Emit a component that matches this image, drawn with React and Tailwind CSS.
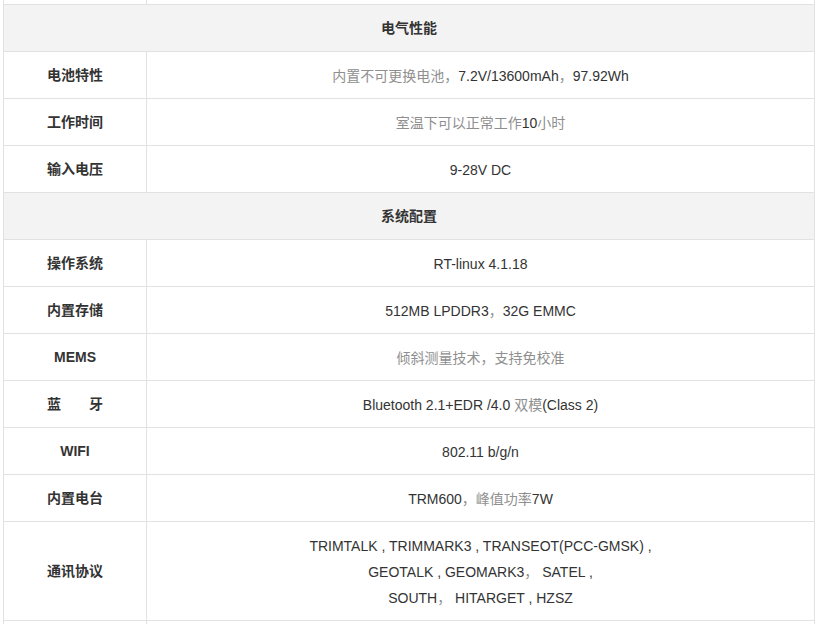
const C = ({ children }) => <span className="text-[#8f8f8f]">{children}</span>;

const sections = [
  {
    title: "电气性能",
    rows: [
      {
        label: "电池特性",
        value: (
          <>
            <C>内置不可更换电池，</C>7.2V/13600mAh<C>，</C>97.92Wh
          </>
        ),
      },
      {
        label: "工作时间",
        value: (
          <>
            <C>室温下可以正常工作</C>10<C>小时</C>
          </>
        ),
      },
      { label: "输入电压", value: "9-28V DC" },
    ],
  },
  {
    title: "系统配置",
    rows: [
      { label: "操作系统", value: "RT-linux 4.1.18" },
      {
        label: "内置存储",
        value: (
          <>
            512MB LPDDR3<C>，</C>32G EMMC
          </>
        ),
      },
      { label: "MEMS", value: <C>倾斜测量技术，支持免校准</C> },
      {
        label: "蓝　　牙",
        value: (
          <>
            Bluetooth 2.1+EDR /4.0 <C>双模</C>(Class 2)
          </>
        ),
      },
      { label: "WIFI", value: "802.11 b/g/n" },
      {
        label: "内置电台",
        value: (
          <>
            TRM600<C>，峰值功率</C>7W
          </>
        ),
      },
      {
        label: "通讯协议",
        tall: true,
        value: (
          <>
            TRIMTALK , TRIMMARK3 , TRANSEOT(PCC-GMSK) ,
            <br />
            GEOTALK , GEOMARK3<C>，</C> SATEL ,
            <br />
            SOUTH<C>，</C> HITARGET , HZSZ
          </>
        ),
      },
    ],
  },
];

const cell = "border border-[#e2e2e2] text-center align-middle pt-[2px]";

export default function App() {
  return (
    <div className="w-[820px] h-[624px] overflow-hidden bg-white font-['Liberation_Sans','Noto_Sans_CJK_SC',sans-serif] text-[14px] text-[#333]">
      <table className="ml-[3px] w-[812px] border-collapse table-fixed">
        <colgroup>
          <col className="w-[143px]" />
          <col />
        </colgroup>
        <tbody>
          <tr className="h-[4px]">
            <td className="border-x border-b border-[#e2e2e2] p-0" />
            <td className="border-x border-b border-[#e2e2e2] p-0" />
          </tr>
          {sections.map((s) => (
            <SectionRows key={s.title} section={s} />
          ))}
          <tr className="h-[47px]">
            <td className={cell} />
            <td className={cell} />
          </tr>
        </tbody>
      </table>
    </div>
  );
}

function SectionRows({ section }) {
  return (
    <>
      <tr className="h-[47px] bg-[#f3f3f3]">
        <td colSpan={2} className={`${cell} font-bold`}>
          {section.title}
        </td>
      </tr>
      {section.rows.map((r) => (
        <tr key={r.label} className={r.tall ? "h-[99px]" : "h-[47px]"}>
          <td className={`${cell} font-bold`}>{r.label}</td>
          <td className={`${cell} leading-[26px]`}>{r.value}</td>
        </tr>
      ))}
    </>
  );
}
